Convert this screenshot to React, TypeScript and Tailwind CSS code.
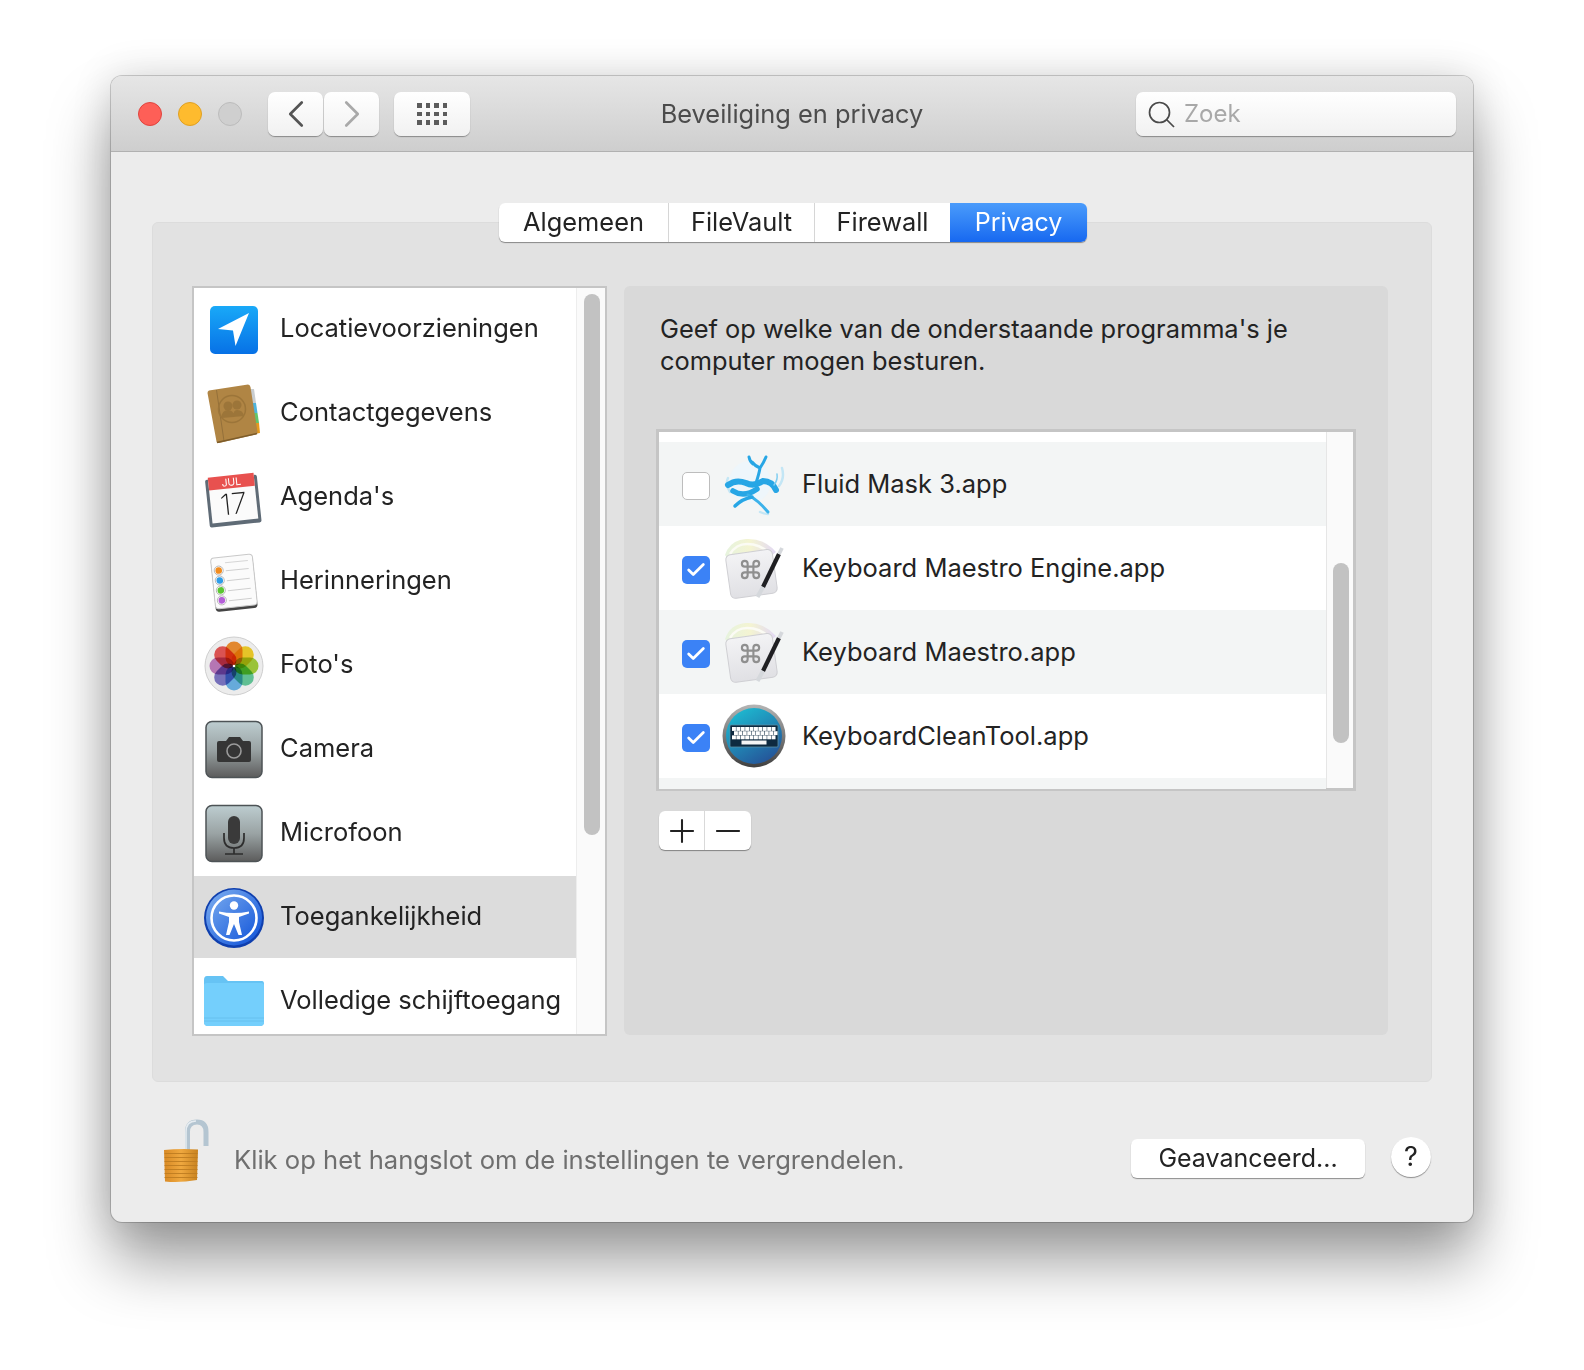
import { Check, ChevronLeft, ChevronRight, Minus, Plus } from "lucide-react";
import type { ReactNode } from "react";

const font = "[font-family:Inter,'Noto_Sans',sans-serif]";

function LocationIcon() {
  return (
    <svg width="60" height="60" viewBox="0 0 60 60">
      <defs>
        <linearGradient id="loc" x1="0" y1="0" x2="0" y2="1">
          <stop offset="0" stopColor="#19a9f8" />
          <stop offset="1" stopColor="#0771e6" />
        </linearGradient>
      </defs>
      <rect x="6" y="6" width="48" height="48" rx="5" fill="url(#loc)" />
      <path d="M45 13 L14 29 L29 30.500 L31.500 46 Z" fill="#fff" />
    </svg>
  );
}

function ContactsIcon() {
  return (
    <svg width="60" height="60" viewBox="0 0 60 60">
      <path d="M44 5 L50 5 L52 19 L46 19Z" fill="#c9cdd0" />
      <path d="M46 19 L52 19 L53.500 29 L47 29Z" fill="#4fb4dc" />
      <path d="M47 29 L53.500 29 L55 39 L49 39Z" fill="#63c56b" />
      <path d="M49 39 L55 39 L56 49 L50 50Z" fill="#e59a1f" />
      <path d="M5 6.500 L44 0.500 Q46 0.500 46.500 3 L53.500 48 Q53.500 50 52 50.500 L15 59 Q13 59.500 12.500 57.500 L3.500 9 Q3.500 7 5 6.500Z" fill="#b08544" />
      <path d="M12.500 6 L20 57" stroke="#94703a" strokeWidth="1" />
      <path d="M13 58.500 L53 49.500" stroke="#7d5c2a" strokeWidth="1.500" />
      <circle cx="28" cy="25" r="13.500" fill="none" stroke="#9c7539" strokeWidth="1.500" />
      <circle cx="24" cy="22" r="4.500" fill="#9c7539" />
      <circle cx="33" cy="21" r="4.500" fill="#9c7539" />
      <path d="M17 34 q1 -8 7 -8 q6 0 6 7z M29 33 q0 -7 4 -7 q6 0 7 6z" fill="#9c7539" />
    </svg>
  );
}

function CalendarIcon() {
  return (
    <svg width="60" height="60" viewBox="0 0 60 60">
      <g transform="rotate(-6 30 30)">
        <rect x="3" y="9" width="52" height="48" rx="2" fill="#5f6b76" />
        <rect x="6" y="7" width="46" height="46" fill="#fbfbfb" />
        <rect x="6" y="7" width="46" height="13" fill="#e8514f" />
        <text x="29" y="17.500" textAnchor="middle" fontFamily="Inter, sans-serif" fontSize="10.500" fill="#fff">JUL</text>
        <text x="29" y="46" textAnchor="middle" fontFamily="Inter, sans-serif" fontSize="29" fontWeight="200" fill="#222">17</text>
      </g>
    </svg>
  );
}

function RemindersIcon() {
  const dots = ["#f28c1f", "#2f9de8", "#5bc632", "#b45fd8"];
  return (
    <svg width="60" height="60" viewBox="0 0 60 60">
      <g transform="rotate(-6 30 30)">
        <rect x="9" y="5" width="42" height="53" rx="3.500" fill="#444" />
        <rect x="9" y="4" width="42" height="51" rx="3.500" fill="#fbfbfb" stroke="#c9c9c9" />
        <path d="M23 10 H46" stroke="#d6d6d6" />
        {dots.map((c, i) => (
          <g key={c}>
            <circle cx="16" cy={17 + i * 10} r="4.500" fill="#fff" stroke="#aaa" strokeWidth="0.800" />
            <circle cx="16" cy={17 + i * 10} r="3.300" fill={c} />
            <path d={`M23 ${18 + i * 10} H46`} stroke="#cfcfcf" />
          </g>
        ))}
      </g>
    </svg>
  );
}

function PhotosIcon() {
  const petals = ["#f59331", "#f8d42b", "#a6d33c", "#68cf9f", "#6eb8ec", "#7f79c9", "#c47fc2", "#ec5a58"];
  return (
    <svg width="60" height="60" viewBox="0 0 60 60">
      <circle cx="30" cy="30" r="29" fill="#ececec" stroke="#cfcfcf" />
      {petals.map((c, i) => (
        <rect
          key={c}
          x="21.500"
          y="5.500"
          width="17"
          height="24.500"
          rx="8.500"
          fill={c}
          className="mix-blend-multiply"
          transform={`rotate(${i * 45} 30 30)`}
        />
      ))}
      <circle cx="30" cy="30" r="1.300" fill="#fff" />
    </svg>
  );
}

function DeviceTile({ children, id }: { children: ReactNode; id: string }) {
  return (
    <svg width="60" height="60" viewBox="0 0 60 60">
      <defs>
        <linearGradient id={id} x1="0" y1="0" x2="0" y2="1">
          <stop offset="0" stopColor="#bdcdd0" />
          <stop offset="0.5" stopColor="#9aa3a4" />
          <stop offset="1" stopColor="#5c5c5c" />
        </linearGradient>
      </defs>
      <rect x="2" y="1.500" width="56" height="56" rx="6" fill={`url(#${id})`} stroke="#4d5356" strokeWidth="1.500" />
      {children}
    </svg>
  );
}

function CameraIcon() {
  return (
    <DeviceTile id="cam">
      <path d="M15 21 h7 l3 -4 h11 l3 4 h6 q2 0 2 2 v17 q0 2 -2 2 H15 q-2 0 -2 -2 V23 q0 -2 2 -2z" fill="#353535" />
      <circle cx="30" cy="31" r="7" fill="none" stroke="#9b9b9b" strokeWidth="1.600" />
    </DeviceTile>
  );
}

function MicIcon() {
  return (
    <DeviceTile id="mic">
      <rect x="24" y="12" width="12" height="28" rx="6" fill="#3a3a3a" />
      <path d="M20 29 v5 q0 10 10 10 q10 0 10 -10 v-5 M30 44 v6 M21 50 H39" fill="none" stroke="#2d2d2d" strokeWidth="1.700" />
    </DeviceTile>
  );
}

function AccessIcon() {
  return (
    <svg width="60" height="60" viewBox="0 0 60 60">
      <defs>
        <linearGradient id="acc" x1="0" y1="0" x2="1" y2="1">
          <stop offset="0" stopColor="#7fb0f0" />
          <stop offset="1" stopColor="#0b4fd8" />
        </linearGradient>
      </defs>
      <circle cx="30" cy="30" r="30" fill="#0f3fae" />
      <circle cx="30" cy="29.500" r="28" fill="url(#acc)" />
      <circle cx="30" cy="30" r="22.500" fill="none" stroke="#fff" strokeWidth="2.600" />
      <circle cx="30" cy="17.500" r="4.200" fill="#fff" />
      <path d="M15 23.500 Q30 26.500 45 23.500 L45 25.500 L35 29 L35 34 L38 47 L34.500 47 L30 36 L25.500 47 L22 47 L25 34 L25 29 L15 25.500Z" fill="#fff" />
    </svg>
  );
}

function FolderIcon() {
  return (
    <svg width="60" height="60" viewBox="0 0 60 60">
      <path d="M0 8 Q0 4 3 4 H19 L24 9 H58 Q60 9 60 12 V50 Q60 54 56 54 H4 Q0 54 0 50Z" fill="#66c3f4" />
      <path d="M0 13 Q0 11 3 11 H57 Q60 11 60 13 V50 Q60 54 56 54 H4 Q0 54 0 50Z" fill="#74cffc" />
      <path d="M0 46 H60 M0 49 H60" stroke="#66c0ee" />
    </svg>
  );
}

function FluidIcon() {
  return (
    <svg width="64" height="64" viewBox="0 0 64 64" fill="none" strokeLinecap="round">
      <circle cx="28" cy="30" r="21" fill="#eef6fb" />
      <path d="M60 16 Q63 26 57 34 M6 26 Q3 32 8 40 M38 60 Q42 62 46 62" stroke="#c3e6f5" strokeWidth="2.500" />
      <path d="M6 33 Q14 27 24 31 Q32 35 41 29 Q50 29 54 38" stroke="#27a6e5" strokeWidth="6" />
      <path d="M34 31 Q37 22 38 16 Q33 14 30 10 M38 16 Q42 10 44 5 M27 5 Q28 10 31 12" stroke="#27a6e5" strokeWidth="3" />
      <path d="M11 39 Q22 46 35 37" stroke="#27a6e5" strokeWidth="5.500" />
      <path d="M26 43 Q36 48 46 60" stroke="#3cb2ea" strokeWidth="3" />
      <path d="M30 45 Q20 47 13 54" stroke="#27a6e5" strokeWidth="3.500" />
      <path d="M52 33 Q56 28 55 22" stroke="#7fcdf0" strokeWidth="1.500" />
    </svg>
  );
}

function MaestroIcon({ id }: { id: string }) {
  return (
    <svg width="64" height="64" viewBox="0 0 64 64">
      <defs>
        <linearGradient id={id} x1="0" y1="0" x2="1" y2="0">
          <stop offset="0" stopColor="#e6f3de" />
          <stop offset="0.5" stopColor="#f4f4d2" />
          <stop offset="1" stopColor="#e2d8f4" />
        </linearGradient>
        <linearGradient id={`${id}t`} x1="0" y1="0" x2="0" y2="1">
          <stop offset="0" stopColor="#f3f3f5" />
          <stop offset="1" stopColor="#e0e0e4" />
        </linearGradient>
      </defs>
      <path d="M3 19 Q8 4 24 3 Q42 2 54 16 L40 28 L10 28Z" fill={`url(#${id})`} />
      <path d="M8 18 Q14 8 25 8 Q38 8 47 17" fill="none" stroke="#fbfbf4" strokeWidth="2.500" />
      <g transform="rotate(-8 29 38)">
        <rect x="6" y="16" width="47" height="44" rx="5" fill={`url(#${id}t)`} stroke="#cfcfd3" />
      </g>
      <g transform="translate(17 22) scale(0.960)" fill="none" stroke="#8f8f8f" strokeWidth="2.200">
        <path d="M15 6v12a3 3 0 1 0 3-3H6a3 3 0 1 0 3 3V6a3 3 0 1 0-3 3h12a3 3 0 1 0-3-3" />
      </g>
      <path d="M57 18 L41 51" stroke="#1f1f22" strokeWidth="4.200" />
      <path d="M41 51 L35.500 61" stroke="#d5d8dc" strokeWidth="4.200" />
      <path d="M60 12 L57 18" stroke="#d5d8dc" strokeWidth="3.800" />
    </svg>
  );
}

function CleanIcon() {
  const rows = [0, 1, 2];
  return (
    <svg width="64" height="64" viewBox="0 0 64 64">
      <defs>
        <linearGradient id="cl" x1="0.200" y1="0" x2="0.800" y2="1">
          <stop offset="0" stopColor="#1dbcd2" />
          <stop offset="1" stopColor="#254f96" />
        </linearGradient>
        <linearGradient id="clr" x1="0" y1="0" x2="0" y2="1">
          <stop offset="0" stopColor="#b5b5b5" />
          <stop offset="1" stopColor="#3f3f3f" />
        </linearGradient>
      </defs>
      <circle cx="32" cy="32" r="31.500" fill="url(#clr)" />
      <circle cx="32" cy="32" r="28" fill="url(#cl)" />
      <rect x="8" y="21" width="48" height="22" rx="1" fill="#0e2a40" stroke="#5b8fa6" strokeWidth="0.800" />
      {rows.map((r) =>
        Array.from({ length: 10 }).map((_, i) => (
          <rect key={`${r}-${i}`} x={10 + i * 4.400 + (r % 2) * 2} y={23 + r * 4.200} width="3.900" height="3.900" fill="#ffffff" />
        ))
      )}
      <rect x="19.500" y="36.500" width="25" height="4" fill="#f5f5f5" />
    </svg>
  );
}

function LockIcon() {
  const lines = [0, 1, 2, 3, 4, 5, 6];
  return (
    <svg width="50" height="64" viewBox="0 0 50 64">
      <defs>
        <linearGradient id="lk" x1="0" y1="0" x2="1" y2="0">
          <stop offset="0" stopColor="#d98a25" />
          <stop offset="0.500" stopColor="#efa83f" />
          <stop offset="1" stopColor="#c8821f" />
        </linearGradient>
      </defs>
      <path d="M25.500 31 V13 Q25.500 3 35 3 Q44 3 44 13 V27" fill="none" stroke="#b4c5d1" strokeWidth="5" />
      <path d="M24 31 V13 Q24 2 34 2" fill="none" stroke="#e6ecf1" strokeWidth="1.500" />
      <path d="M2 31 Q18 29.500 36 30.500 L35 61 Q18 64 3 62.500Z" fill="url(#lk)" />
      {lines.map((i) => (
        <path key={i} d={`M2.500 ${34.500 + i * 4} H35.500`} stroke="#bd7c20" strokeWidth="0.900" />
      ))}
    </svg>
  );
}

const categories = [
  { label: "Locatievoorzieningen", icon: <LocationIcon /> },
  { label: "Contactgegevens", icon: <ContactsIcon /> },
  { label: "Agenda's", icon: <CalendarIcon /> },
  { label: "Herinneringen", icon: <RemindersIcon /> },
  { label: "Foto's", icon: <PhotosIcon /> },
  { label: "Camera", icon: <CameraIcon /> },
  { label: "Microfoon", icon: <MicIcon /> },
  { label: "Toegankelijkheid", icon: <AccessIcon />, active: true },
  { label: "Volledige schijftoegang", icon: <FolderIcon /> },
];

const apps = [
  { label: "Fluid Mask 3.app", icon: <FluidIcon />, checked: false },
  { label: "Keyboard Maestro Engine.app", icon: <MaestroIcon id="km1" />, checked: true },
  { label: "Keyboard Maestro.app", icon: <MaestroIcon id="km2" />, checked: true },
  { label: "KeyboardCleanTool.app", icon: <CleanIcon />, checked: true },
];

const tabBtn = "flex h-full items-center justify-center border-r border-[#d6d6d6]";
const toolBtn =
  "flex h-[44px] items-center justify-center rounded-[7px] bg-gradient-to-b from-white to-[#f1f1f1] shadow-[0_1px_1px_rgba(0,0,0,0.35)]";

export default function App() {
  return (
    <div className={`min-h-[1370px] bg-white pl-[111px] pt-[76px] text-[#232323] ${font}`}>
      <div className="flex h-[1146px] w-[1362px] flex-col overflow-hidden rounded-[11px] bg-[#ececec] shadow-[0_0_0_1px_rgba(0,0,0,0.18),0_40px_62px_rgba(0,0,0,0.38),0_0_40px_rgba(0,0,0,0.14)]">
        {/* title bar */}
        <div className="relative flex h-[76px] shrink-0 items-center border-b border-[#b1b1b1] bg-gradient-to-b from-[#e6e6e6] to-[#cecece] pl-[27px] pr-[17px] pt-[1px]">
          <div className="h-6 w-6 rounded-full border border-[#e0443e] bg-[#fe5f57]" />
          <div className="ml-4 h-6 w-6 rounded-full border border-[#dfa023] bg-[#febb2e]" />
          <div className="ml-4 h-6 w-6 rounded-full border border-[#bcbcbc] bg-[#cfcfcf]" />
          <div className={`ml-[26px] w-[55px] ${toolBtn}`}>
            <ChevronLeft size={46} strokeWidth={1.400} className="text-[#555555]" />
          </div>
          <div className={`ml-[1px] w-[55px] ${toolBtn}`}>
            <ChevronRight size={46} strokeWidth={1.400} className="text-[#a9a9a9]" />
          </div>
          <div className={`ml-[15px] w-[76px] ${toolBtn}`}>
            <div className="grid grid-cols-4 gap-x-[4px] gap-y-[4px]">
              {Array.from({ length: 12 }).map((_, i) => (
                <div key={i} className="h-[4.500px] w-[4.500px] bg-[#5c5c5c]" />
              ))}
            </div>
          </div>
          <div className="mt-[1px] flex-1 pr-[22px] text-center text-[25.400px] text-[#4c4c4c]">Beveiliging en privacy</div>
          <div className={`w-[320px] justify-start pl-[10px] ${toolBtn}`}>
            <svg width="30" height="30" viewBox="0 0 30 30" fill="none" stroke="#4a4a4a" strokeWidth="1.700">
              <circle cx="13.500" cy="13.500" r="10" />
              <path d="M20.500 20.500 L28 28" />
            </svg>
            <span className="ml-[8px] text-[24px] text-[#a8a8a8]">Zoek</span>
          </div>
        </div>

        {/* body */}
        <div className="flex flex-1 flex-col px-[41px] pt-[51px]">
          <div className="relative z-10 -mb-[20px] ml-[2px] flex h-[39px] justify-center text-[25.400px]">
            <div className="flex h-full overflow-hidden rounded-[6px] bg-white shadow-[0_1px_1px_rgba(0,0,0,0.4)]">
              <div className={`${tabBtn} w-[170px]`}>Algemeen</div>
              <div className={`${tabBtn} w-[146px]`}>FileVault</div>
              <div className={`${tabBtn} w-[135px] border-r-0`}>Firewall</div>
              <div className="flex h-full w-[137px] items-center justify-center bg-gradient-to-b from-[#4a9bfb] to-[#1768f0] text-[25px] text-white">
                Privacy
              </div>
            </div>
          </div>

          <div className="flex h-[860px] gap-[17px] rounded-[6px] border border-[#dcdcdc] bg-[#e2e2e2] pl-[39px] pt-[63px]">
            {/* categories */}
            <div className="flex h-[750px] w-[415px] overflow-hidden border-2 border-[#c5c5c5] bg-white">
              <div className="w-[382px] shrink-0">
                {categories.map((c) => (
                  <div key={c.label} className="h-[84px] text-[25.500px]">
                    <div className={`flex h-[82px] items-center pl-[10px] ${c.active ? "bg-[#dcdcdc]" : ""}`}>
                      <div className="mt-[2px] flex w-[60px] justify-center">{c.icon}</div>
                      <span className="mb-[2px] ml-[16px] whitespace-nowrap">{c.label}</span>
                    </div>
                  </div>
                ))}
              </div>
              <div className="flex-1 border-l border-[#ededed] bg-[#fafafa] px-[7px] pt-[6px]">
                <div className="h-[541px] w-4 rounded-full bg-[#c2c2c2]" />
              </div>
            </div>

            {/* detail */}
            <div className="h-[749px] w-[764px] rounded-[6px] bg-[#d9d9d9] pl-[32px] pt-[27px]">
              <p className="pl-[4px] text-[25.400px] leading-[32px]">
                Geef op welke van de onderstaande programma's je
                <br />
                computer mogen besturen.
              </p>
              <div className="mt-[52px] flex h-[362px] w-[700px] flex-col border-[3px] border-[#c5c5c5] bg-white">
                <div className="flex h-full">
                  <div className="w-[667px] shrink-0 pt-[10px]">
                    {apps.map((a, i) => (
                      <div
                        key={a.label}
                        className={`flex h-[84px] items-center pl-[23px] text-[25.500px] ${i % 2 === 0 ? "bg-[#f3f5f5]" : "bg-white"}`}
                      >
                        {a.checked ? (
                          <div className="mt-[3px] flex h-[28px] w-[28px] items-center justify-center rounded-[5px] bg-[#3b82f6]">
                            <Check size={22} strokeWidth={3} className="text-white" />
                          </div>
                        ) : (
                          <div className="mt-[3px] h-[28px] w-[28px] rounded-[5px] border border-[#bdbdbd] bg-white" />
                        )}
                        <div className="ml-[12px] flex w-[64px] justify-center">{a.icon}</div>
                        <span className="ml-[16px] whitespace-nowrap">{a.label}</span>
                      </div>
                    ))}
                    <div className="h-[11px] bg-[#f3f5f5]" />
                  </div>
                  <div className="flex-1 border-l border-[#e6e6e6] bg-[#fafafa] pl-[6px] pt-[131px]">
                    <div className="h-[180px] w-4 rounded-full bg-[#c2c2c2]" />
                  </div>
                </div>
              </div>
              <div className="ml-[3px] mt-[20px] flex h-[39px] w-[92px] overflow-hidden rounded-[6px] bg-white shadow-[0_1px_1px_rgba(0,0,0,0.4)]">
                <div className="flex w-[46px] items-center justify-center border-r border-[#d9d9d9]">
                  <Plus size={38} strokeWidth={1.300} className="text-[#222222]" />
                </div>
                <div className="flex flex-1 items-center justify-center">
                  <Minus size={38} strokeWidth={1.300} className="text-[#222222]" />
                </div>
              </div>
            </div>
          </div>

          {/* footer */}
          <div className="flex flex-1 items-start">
            <div className="ml-[10px] mt-[37px]">
              <LockIcon />
            </div>
            <div className="ml-[22px] mt-[59px] text-[25.600px] text-[#6f6f6f]">
              Klik op het hangslot om de instellingen te vergrendelen.
            </div>
            <div className="ml-auto mt-[57px] flex h-[39px] w-[234px] items-center justify-center rounded-[6px] bg-white text-[25px] shadow-[0_1px_1px_rgba(0,0,0,0.4)]">
              Geavanceerd...
            </div>
            <div className="ml-[26px] mr-[1px] mt-[55px] flex h-[40px] w-[40px] items-center justify-center rounded-full bg-white text-[27px] shadow-[0_1px_1px_rgba(0,0,0,0.4)]">
              ?
            </div>
          </div>
        </div>
      </div>
    </div>
  );
}
